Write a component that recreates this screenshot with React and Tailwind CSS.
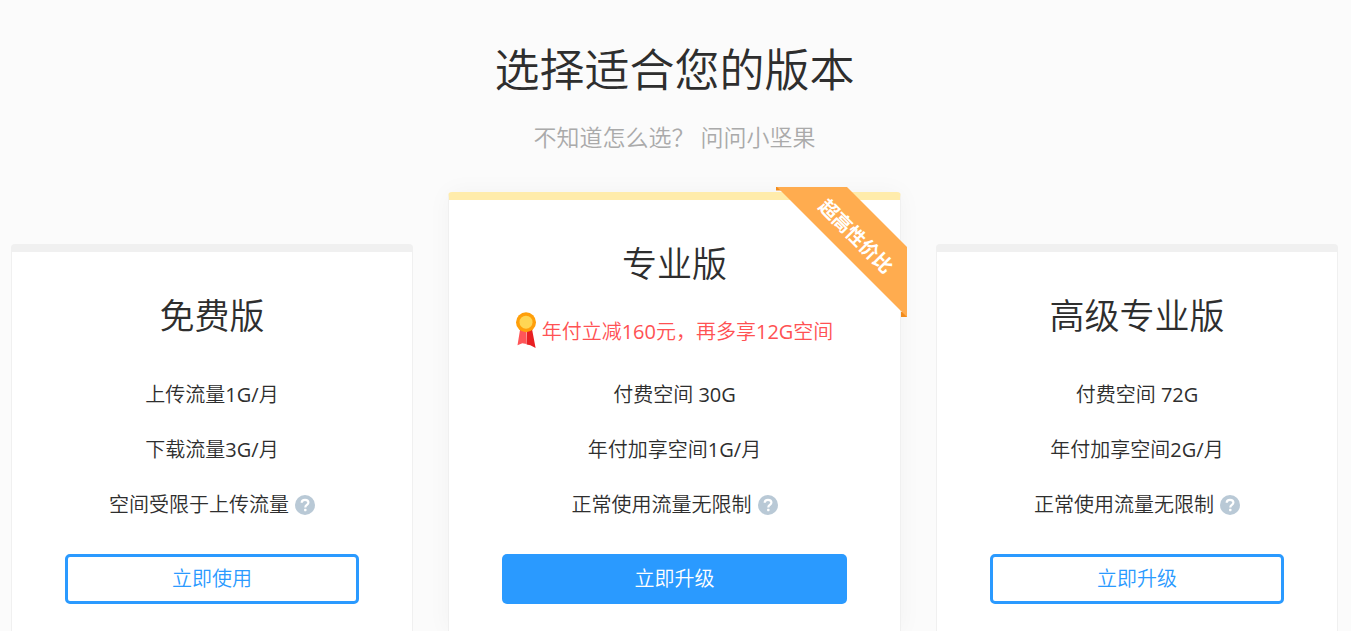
const outlineButton =
  'h-[50px] w-full cursor-pointer rounded-[5px] border-3 border-[#2a9aff] bg-white text-xl text-[#2a9aff]';
const solidButton =
  'h-[50px] w-full cursor-pointer rounded-[5px] bg-[#2a9aff] text-xl text-white';

function HelpIcon() {
  return (
    <button type="button" aria-label="说明" className="ml-1.5 size-5 shrink-0 cursor-pointer">
      <svg viewBox="0 0 20 20" className="size-5" aria-hidden="true">
        <circle cx="10" cy="10" r="10" fill="#b9c9d6" />
        <path
          d="M6.7 7.8C6.7 5.7 8.1 4.8 10 4.8s3.4 1 3.4 2.8c0 2.3-3.1 2.4-3.1 4.8"
          fill="none"
          stroke="#fff"
          strokeWidth="2.2"
        />
        <rect x="9.1" y="13.8" width="2.4" height="2.4" rx="0.6" fill="#fff" />
      </svg>
    </button>
  );
}

function Medal() {
  return (
    <svg viewBox="0 0 20 36" className="h-9 w-5 shrink-0" aria-hidden="true">
      <path d="M4 18L1.5 33.2L6.3 31.2L10.5 32V18Z" fill="#ff5558" />
      <path d="M11 17L10.6 32.6L14.4 33.2L19.6 36L16 17Z" fill="#e81f22" />
      <circle cx="10" cy="10.2" r="10" fill="#ff9f0a" />
      <circle cx="10" cy="10.2" r="6.5" fill="#ffd654" />
    </svg>
  );
}

function Ribbon() {
  return (
    <svg
      viewBox="0 0 131 131"
      className="absolute -top-[13px] -right-[7px] size-[131px]"
      role="img"
      aria-label="超高性价比"
    >
      <path d="M0 0V3.5H6V0ZM125 125V130H131V125Z" fill="#f28c1c" />
      <path d="M1 0H71L131 60V130Z" fill="#ffac4f" />
      <text
        x="81"
        y="48"
        transform="rotate(45 81 48)"
        textAnchor="middle"
        dominantBaseline="central"
        className="font-['Noto_Sans_CJK_SC',sans-serif] text-[19px] font-bold"
        fill="#fff"
      >
        超高性价比
      </text>
    </svg>
  );
}

function Plan({ name, promo, features, action, featured }) {
  return (
    <section
      className={
        featured
          ? 'relative rounded-t-[4px] border border-t-8 border-b-0 border-[#f0f0f0] border-t-[#ffecab] bg-white px-[53px] pt-9 pb-7 shadow-[0_0_24px_rgba(0,0,0,0.04)]'
          : 'mt-[52px] rounded-t-[4px] border border-t-8 border-b-0 border-[#f0f0f0] bg-white px-[53px] pt-9 pb-7'
      }
    >
      {featured && <Ribbon />}
      <h2 className="text-center text-[35px] leading-[56px]">{name}</h2>
      {promo && (
        <p className="mt-5 flex h-8 items-start justify-center gap-1.5 text-xl leading-10 whitespace-nowrap text-[#ff5153]">
          <Medal />
          {promo}
        </p>
      )}
      <ul className="mt-[23px] mb-[22px]">
        {features.map((feature, i) => (
          <li key={feature} className="flex h-[55px] items-center justify-center text-xl whitespace-nowrap">
            {feature}
            {i === features.length - 1 && <HelpIcon />}
          </li>
        ))}
      </ul>
      <button type="button" className={featured ? solidButton : outlineButton}>
        {action}
      </button>
    </section>
  );
}

const plans = [
  {
    name: '免费版',
    features: ['上传流量1G/月', '下载流量3G/月', '空间受限于上传流量'],
    action: '立即使用',
  },
  {
    name: '专业版',
    promo: '年付立减160元，再多享12G空间',
    features: ['付费空间 30G', '年付加享空间1G/月', '正常使用流量无限制'],
    action: '立即升级',
    featured: true,
  },
  {
    name: '高级专业版',
    features: ['付费空间 72G', '年付加享空间2G/月', '正常使用流量无限制'],
    action: '立即升级',
  },
];

export default function App() {
  return (
    <main
      lang="zh-CN"
      className="flex min-h-screen flex-col bg-[#fbfbfb] pt-9 pr-[13px] pl-[11px] font-['Open_Sans','Noto_Sans_CJK_SC_DemiLight','Noto_Sans_CJK_SC',sans-serif] font-normal text-[#2e2e2e]"
    >
      <header className="text-center">
        <h1 className="text-[45px] leading-[68px]">选择适合您的版本</h1>
        <p className="mt-[15px] text-[23px] leading-9 text-[#aaa]">
          不知道怎么选？ <a href="#ask">问问小坚果</a>
        </p>
      </header>
      <div className="mx-auto mt-[37px] grid w-full max-w-[1327px] flex-1 grid-cols-[402fr_453fr_402fr] gap-[35px]">
        {plans.map((plan) => (
          <Plan key={plan.name} {...plan} />
        ))}
      </div>
    </main>
  );
}
